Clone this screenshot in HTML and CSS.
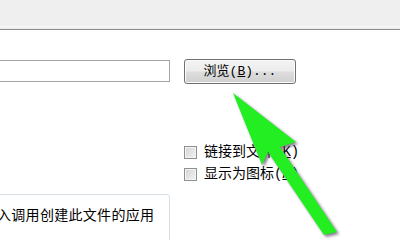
FILE: index.html
```html
<!DOCTYPE html>
<html lang="zh-CN">
<head>
<meta charset="utf-8">
<title>插入对象</title>
<link rel="stylesheet" href="styles.css">
</head>
<body>
<div class="page">
  <div class="header"></div>
  <div class="file-row">
    <div class="text-field"></div>
    <div class="button">浏览(<u>B</u>)...</div>
  </div>
  <div class="options">
    <div class="option"><span class="checkbox"></span><span class="label">链接到文件(<u>K</u>)</span></div>
    <div class="option"><span class="checkbox"></span><span class="label">显示为图标(<u>A</u>)</span></div>
  </div>
  <div class="groupbox">
    <div class="group-text">入调用创建此文件的应用</div>
  </div>
  <svg class="arrow" width="400" height="240" viewBox="0 0 400 240">
    <polygon points="233,93 296,142 280,147 337,232 324,235 268,152 262,165" fill="#22ee22"/>
  </svg>
</div>
</body>
</html>
```
FILE: styles.css
```css
html, body {
  margin: 0;
  padding: 0;
  background: #ffffff;
}
.page {
  position: relative;
  width: 400px;
  height: 240px;
  overflow: hidden;
  background: #ffffff;
  font-family: "Liberation Mono", "Noto Sans CJK SC", monospace;
  color: #000000;
}
.header {
  height: 29px;
  background: linear-gradient(to bottom, #efefef 0, #efefef 26px, #f9f9f9 26px, #f9f9f9 27px, #efefef 27px);
  border-bottom: 1px solid #8a8a8a;
}
.file-row {
  display: flex;
  align-items: flex-start;
  margin-top: 29px;
}
.text-field {
  box-sizing: border-box;
  margin-left: -10px;
  margin-top: 1px;
  width: 180px;
  height: 22px;
  border: 1px solid #a4a4a4;
  background: #ffffff;
}
.button {
  box-sizing: border-box;
  margin-left: 14px;
  width: 112px;
  height: 25px;
  border: 1px solid #707070;
  border-radius: 3px;
  background: linear-gradient(to bottom, #f3f3f3 0%, #ececec 48%, #dddddd 52%, #d0d0d0 100%);
  box-shadow: inset 0 0 0 1px #fbfbfb;
  display: flex;
  align-items: center;
  justify-content: center;
  font-size: 13px;
  line-height: 23px;
}
.options {
  margin-left: 184px;
  margin-top: 57px;
  display: flex;
  flex-direction: column;
}
.option {
  display: flex;
  align-items: center;
  height: 22px;
  gap: 7px;
}
.checkbox {
  box-sizing: border-box;
  width: 13px;
  height: 13px;
  border: 1px solid #8e8f8f;
  background: linear-gradient(135deg, #d3d3d3, #f3f3f3);
  box-shadow: inset 0 0 0 1px #f4f4f4;
}
.label {
  font-size: 14px;
  line-height: 22px;
}
.groupbox {
  box-sizing: border-box;
  margin-left: -10px;
  margin-top: 9px;
  width: 180px;
  height: 80px;
  border: 1px solid #d5dfe5;
  border-radius: 3px;
  padding: 11px 0 0 6px;
}
.group-text {
  font-size: 14px;
  line-height: 20px;
  letter-spacing: 0.3px;
  white-space: nowrap;
}
.arrow {
  position: absolute;
  left: 0;
  top: 0;
  filter: drop-shadow(2px 2px 1.5px rgba(70, 50, 80, 0.65));
}
```
